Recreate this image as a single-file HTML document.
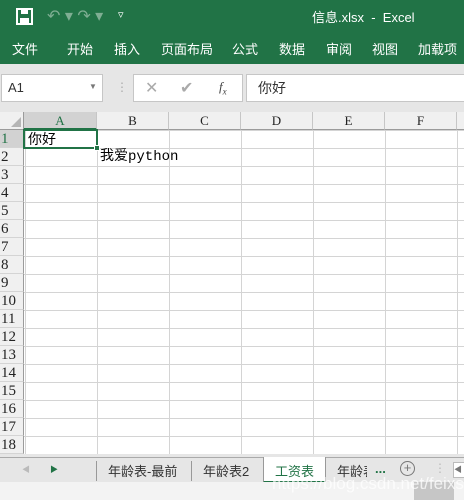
<!DOCTYPE html><html><head><meta charset="utf-8"><style>
*{margin:0;padding:0;box-sizing:border-box}
body{width:464px;height:500px;overflow:hidden;background:#e6e6e6;font-family:"Liberation Sans","Noto Sans CJK SC",sans-serif;position:relative}
.a{position:absolute}
.g{background:#217346;left:0;top:0;width:464px;height:64px}
.w{color:#fff;font-size:13px}
.tab{top:39px;color:#fff;font-size:13px}
.box{background:#fff;border:1px solid #c6c6c6}
.ch{top:112px;height:18px;background:#f0f0f0;border-right:1px solid #c6c6c6;border-bottom:1px solid #9b9b9b;text-align:center;font-family:"Liberation Serif","Noto Serif CJK SC",serif;font-size:13px;line-height:18px;color:#222}
.grid{left:24px;top:130px;width:440px;height:324px;background-color:#fff;background-image:linear-gradient(to right,#d4d4d4 1px,transparent 1px),linear-gradient(to bottom,#d4d4d4 1px,transparent 1px);background-size:72px 18px,72px 18px;background-position:1px 0}
.rh{left:0;width:24px;height:18px;background:#f0f0f0;border-bottom:1px solid #d4d4d4;border-right:1px solid #9b9b9b;font-family:"Liberation Serif",serif;font-size:15px;line-height:18px;padding-left:1px;color:#222}
.sh{top:461px;font-size:13px;color:#333}
</style></head><body>
<div class="a g"></div>
<svg class="a" style="left:16px;top:8px" width="18" height="18"><rect x="1" y="1" width="15" height="15" fill="none" stroke="#fff" stroke-width="2"/><rect x="5" y="2" width="7" height="4" fill="#fff"/><rect x="4" y="10" width="9" height="5" fill="#fff"/></svg>
<div class="a w" style="left:47px;top:6px;color:#7fae93;font-size:16px">↶ ▾ ↷ ▾</div>
<div class="a w" style="left:118px;top:8px;font-size:11px">▿</div>
<div class="a w" style="left:312px;top:7px">信息.xlsx&nbsp; - &nbsp;Excel</div>
<div class="a tab" style="left:12px">文件</div>
<div class="a tab" style="left:67px">开始</div>
<div class="a tab" style="left:114px">插入</div>
<div class="a tab" style="left:161px">页面布局</div>
<div class="a tab" style="left:232px">公式</div>
<div class="a tab" style="left:279px">数据</div>
<div class="a tab" style="left:326px">审阅</div>
<div class="a tab" style="left:372px">视图</div>
<div class="a tab" style="left:418px">加载项</div>
<div class="a box" style="left:1px;top:74px;width:102px;height:28px"></div>
<div class="a" style="left:8px;top:80px;font-size:13px;color:#333">A1</div>
<div class="a" style="left:89px;top:82px;font-size:8px;color:#777">▼</div>
<div class="a" style="left:116px;top:80px;color:#aaa;font-size:12px">⋮</div>
<div class="a box" style="left:133px;top:74px;width:110px;height:28px"></div>
<div class="a" style="left:145px;top:78px;color:#aaa;font-size:16px">✕</div>
<div class="a" style="left:180px;top:78px;color:#aaa;font-size:16px">✔</div>
<div class="a" style="left:219px;top:79px;color:#444;font-size:13px;font-style:italic;font-family:'Liberation Serif',serif">f<sub style="font-size:9px">x</sub></div>
<div class="a box" style="left:246px;top:74px;width:220px;height:28px"></div>
<div class="a" style="left:258px;top:78px;font-size:14px;color:#333">你好</div>
<div class="a" style="left:0;top:112px;width:24px;height:18px;background:#f0f0f0;border-right:1px solid #9b9b9b;border-bottom:1px solid #9b9b9b"></div>
<div class="a" style="left:11px;top:117px;width:0;height:0;border-left:10px solid transparent;border-bottom:10px solid #b5b5b5"></div>
<div class="a ch" style="left:24px;width:73px;background:#d2d2d2;color:#217346;border-bottom:2px solid #217346">A</div>
<div class="a ch" style="left:97px;width:72px">B</div>
<div class="a ch" style="left:169px;width:72px">C</div>
<div class="a ch" style="left:241px;width:72px">D</div>
<div class="a ch" style="left:313px;width:72px">E</div>
<div class="a ch" style="left:385px;width:72px">F</div>
<div class="a ch" style="left:457px;width:10px"></div>
<div class="a grid"></div>
<div class="a rh" style="top:130px;background:#d2d2d2;color:#217346">1</div>
<div class="a rh" style="top:148px">2</div><div class="a rh" style="top:166px">3</div><div class="a rh" style="top:184px">4</div><div class="a rh" style="top:202px">5</div><div class="a rh" style="top:220px">6</div><div class="a rh" style="top:238px">7</div><div class="a rh" style="top:256px">8</div><div class="a rh" style="top:274px">9</div><div class="a rh" style="top:292px">10</div><div class="a rh" style="top:310px">11</div><div class="a rh" style="top:328px">12</div><div class="a rh" style="top:346px">13</div><div class="a rh" style="top:364px">14</div><div class="a rh" style="top:382px">15</div><div class="a rh" style="top:400px">16</div><div class="a rh" style="top:418px">17</div><div class="a rh" style="top:436px">18</div>
<div class="a" style="left:23px;top:129px;width:75px;height:20px;border:2px solid #217346"></div>
<div class="a" style="left:94px;top:145px;width:6px;height:6px;background:#217346;border:1px solid #fff"></div>
<div class="a" style="left:28px;top:130px;font-size:14px;line-height:18px">你好</div>
<div class="a" style="left:100px;top:148px;font-size:14px;line-height:18px;font-family:'Liberation Mono','Noto Sans CJK SC',monospace">我爱python</div>
<div class="a" style="left:0;top:457px;width:464px;height:25px;background:#e6e6e6;border-top:1px solid #aaa"></div>
<div class="a" style="left:22px;top:464px;font-size:8px;color:#bbb">◀</div>
<div class="a" style="left:50px;top:464px;font-size:8px;color:#217346">▶</div>
<div class="a" style="left:96px;top:461px;width:1px;height:20px;background:#999"></div>
<div class="a sh" style="left:108px">年龄表-最前</div>
<div class="a" style="left:191px;top:461px;width:1px;height:20px;background:#999"></div>
<div class="a sh" style="left:203px">年龄表2</div>
<div class="a" style="left:263px;top:457px;width:63px;height:26px;background:#fff;border-bottom:2px solid #217346;border-left:1px solid #999;border-right:1px solid #999"></div>
<div class="a sh" style="left:275px;color:#217346">工资表</div>
<div class="a sh" style="left:337px;width:30px;overflow:hidden;white-space:nowrap">年龄表</div>
<div class="a sh" style="left:375px;color:#217346;font-weight:bold">...</div>
<div class="a" style="left:400px;top:461px;width:15px;height:15px;border:1.5px solid #777;border-radius:50%;text-align:center;font-size:13px;line-height:12px;color:#777">+</div>
<div class="a" style="left:434px;top:461px;color:#bbb;font-size:12px">⋮</div>
<div class="a" style="left:453px;top:462px;width:14px;height:16px;background:#fff;border:1px solid #bbb;font-size:8px;color:#777;line-height:14px">◀</div>
<div class="a" style="left:0;top:482px;width:464px;height:18px;background:#f3f3f3"></div>
<div class="a" style="left:414px;top:482px;width:40px;height:18px;background:#c6c6c6"></div>
<div class="a" style="left:272px;top:474px;font-size:17px;color:rgba(255,255,255,0.75)">https://blog.csdn.net/feixs1</div>
</body></html>
